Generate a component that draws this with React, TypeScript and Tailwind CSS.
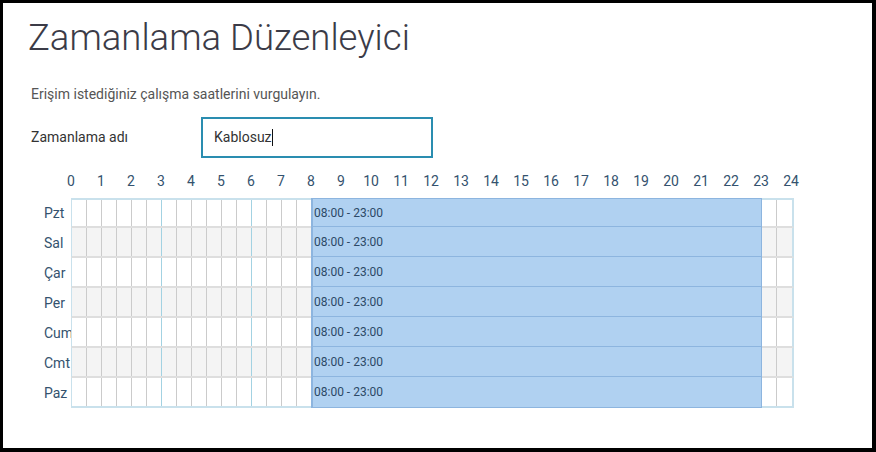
import React from "react";

const days = ["Pzt", "Sal", "Çar", "Per", "Cum", "Cmt", "Paz"];
const hours = Array.from({ length: 25 }, (_, i) => i);
const cells = Array.from({ length: 48 }, (_, i) => i);

function DayRow({ day, index, last }: { day: string; index: number; last: boolean }) {
    const shaded = index % 2 === 1;
    return (
        <div className="flex items-stretch h-[30px]">
            <div className="w-[27px] shrink-0 flex items-center text-[14px] text-[#34526e] whitespace-nowrap">{day}</div>
            <div
                className={
                    "relative flex border-l border-r-2 border-[#c9e1ec] " +
                    (shaded ? "bg-[#f4f4f4] " : "bg-white ") +
                    (last ? "border-b-2 " : "border-b-2 border-b-[#dedede] ") +
                    (index === 0 ? "border-t-2" : "")
                }
            >
                {cells.map((c) => (
                    <div
                        key={c}
                        className={
                            "w-[15px] h-full " +
                            (c === 47 ? "" : c % 6 === 5 ? "border-r border-[#a3d2e2]" : "border-r border-[#cbcbcb]")
                        }
                    />
                ))}
                <div className="absolute left-[239px] w-[451px] top-[-2px] bottom-[-2px] bg-[#b0d1f1] border border-[#8db5df] border-l-2 flex items-center pl-[1px] text-[12px] text-[#2c4966]">
                    08:00 - 23:00
                </div>
            </div>
        </div>
    );
}

export default function App() {
    return (
        <div className="w-[876px] h-[452px] bg-white border-black border-t-[3px] border-l-[3px] border-r-[4px] border-b-[4px] overflow-hidden font-['Roboto',sans-serif]">
            <div className="pt-[11px] pl-[25px]">
                <h1 className="text-[36.5px] leading-[48px] text-[#3b3b47] font-light">Zamanlama Düzenleyici</h1>
                <p className="mt-[22px] pl-[3px] text-[14px] leading-[20px] text-[#555]">
                    Erişim istediğiniz çalışma saatlerini vurgulayın.
                </p>
                <div className="mt-[13px] pl-[3px] flex items-center">
                    <div className="w-[170px] text-[14px] text-[#333]">Zamanlama adı</div>
                    <div className="w-[232px] h-[41px] border-2 border-[#2a8db0] flex items-center pl-[11px] text-[14px] text-[#333]">
                        Kablosuz<span className="inline-block w-px h-[17px] bg-[#111]" />
                    </div>
                </div>
                <div className="mt-[13px] ml-[28px] flex h-[27px]">
                    {hours.map((h) => (
                        <div key={h} className="w-[30px] text-center text-[14px] leading-[20px] text-[#34526e]">
                            {h}
                        </div>
                    ))}
                </div>
                <div className="ml-[16px]">
                    {days.map((d, i) => (
                        <DayRow key={d} day={d} index={i} last={i === days.length - 1} />
                    ))}
                </div>
            </div>
        </div>
    );
}
